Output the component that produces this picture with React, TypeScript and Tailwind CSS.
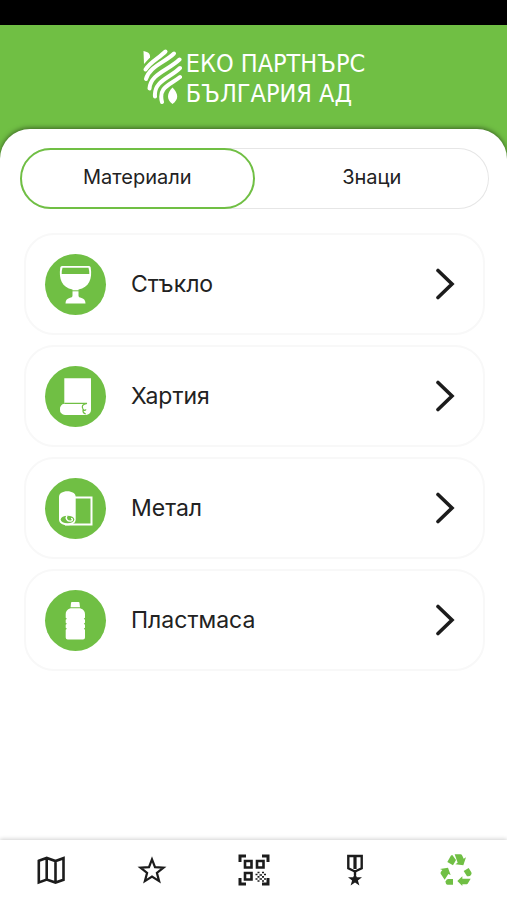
import React from 'react';

const GlassIcon = () => (
  <svg viewBox="0 0 61 61" className="size-full" fill="#fff">
    <path d="M17 12h27q1.500 0 1.700 1.500C47.500 25 44 33.500 33.500 35.500v6c0 1.500 1 2 3 2.500 2.500.7 4 2.300 4 5.500h-20c0-3.200 1.500-4.800 4-5.500 2-.5 3-1 3-2.500v-6C17 33.500 13.500 25 15.300 13.500Q15.500 12 17 12z" />
    <path d="M17.500 13.800h26q.9 3 .8 6.200H16.700q-.1-3.200.8-6.200z" fill="#70bf44" />
    <path d="M27 36.800h7" stroke="#70bf44" strokeWidth="1" />
  </svg>
);

const PaperIcon = () => (
  <svg viewBox="0 0 61 61" className="size-full" fill="#fff">
    <path d="M19.300 12.300H46V44a5 5 0 0 1-5 5H20a5 5 0 0 1-5-5.500 5 5 0 0 1 4.300-5.700z" />
    <path d="M19.300 37.300H42c-4.500.8-5.700 3-4 5.700 1.200 1.800 2.800 1.600 2.800.2M38 43.500c-.3 2.600.8 4 2.800 4.500" fill="none" stroke="#70bf44" strokeWidth="1.200" />
  </svg>
);

const MetalIcon = () => (
  <svg viewBox="0 0 61 61" className="size-full" fill="none">
    <path d="M30 19.500h16.500v27H20" stroke="#fff" strokeWidth="2" />
    <path d="M14 19c0-3.500 3.600-5.700 8.300-5.700s8.400 2.200 8.400 5.700v22.500c0 3-3 5.800-8.400 5.800S14 44.500 14 41.500z" fill="#fff" />
    <ellipse cx="22.500" cy="41.500" rx="6.800" ry="3.800" fill="#70bf44" />
    <path d="M22 37.500c-2 3 .4 6 3.700 5.600 2.300-.3 2.200-2.600.3-2.700" stroke="#fff" strokeWidth="1.400" />
  </svg>
);

const BottleIcon = () => (
  <svg viewBox="0 0 61 61" className="size-full" fill="#fff">
    <path d="M27 12h6.500q1 0 1 1l.5 4.200h-9.400L26 13q0-1 1-1z" />
    <path d="M25.500 18.300h9.600c3.700 1.200 4.900 3.200 4.900 6v3.500l-1.200 1 1.200 1v3l-1.200 1 1.200 1v3l-1.200 1 1.200 1v7.700q0 2-2 2H22.700q-2 0-2-2v-7.700l1.200-1-1.200-1v-3l1.200-1-1.200-1v-3l1.200-1-1.200-1v-3.500c0-2.800 1.200-4.800 4.800-6z" />
  </svg>
);

const Logo = () => (
  <svg viewBox="0 0 40 58" className="h-[58px] w-10" fill="none" stroke="#fff" strokeWidth="4" strokeLinecap="round">
    <path d="M1.500 3c5 1 7 3 6.500 6.500L2 16z" fill="#fff" stroke="none" />
    <path d="M23.500 3.500C17 10 8 14 3.500 21.500" />
    <path d="M32 5.500C22 15 7 19 4 31" />
    <path d="M37.500 11.500C26 22.500 8.500 26 7.500 40.500" />
    <path d="M38 20C28 30 11.500 33 13 48.500" />
    <path d="M38 29C28 37 16 39 20 54" />
    <path d="M30.500 39.500c6 6 6.500 12 0 16.500-6.500-4.500-5.500-11 0-16.500z" fill="#fff" stroke="none" />
  </svg>
);

const MapIcon = () => (
  <svg viewBox="0 0 32 32" className="size-8" fill="none" stroke="#1c1c1c" strokeWidth="2.600">
    <path d="M3.800 6.800 11.700 4l8.800 3 8-2.800v21.600L20.500 28.600l-8.800-3-7.900 2.800zM11.700 4v21.600M20.500 7v21.600" />
  </svg>
);

const StarIcon = () => (
  <svg viewBox="0 0 32 32" className="size-8" fill="none" stroke="#1c1c1c" strokeWidth="2.200">
    <path d="m16 5.300 3 7.900 8.500.4-6.600 5.300 2.200 8.200-7.100-4.600-7.100 4.600 2.200-8.200-6.600-5.300 8.500-.4z" />
  </svg>
);

const ScanIcon = () => (
  <svg viewBox="0 0 32 32" className="size-8" fill="none" stroke="#1c1c1c">
    <path d="M2 8V2h6M24 2h6v6M2 24v6h6M30 24v6h-6" strokeWidth="3" />
    <path d="M7 7h6.500v6.500H7zM19 7h6.500v6.500H19zM7 19h6.500v6.500H7z" strokeWidth="2.600" />
    <path d="M19.500 18.500h2M24 18.500h2M17.500 20.500h2M21.500 21h2.500M26 20.500h2M19.500 22.800h2M24 22.800h2M17.500 25h2M21.500 25h2.500M26 25h2M19.500 27h2M24 27h2" strokeWidth="1.700" />
  </svg>
);

const MedalIcon = () => (
  <svg viewBox="0 0 32 32" className="size-8" fill="none" stroke="#1c1c1c">
    <path d="M9.300 2h13.400v12.300L16 17.500l-6.700-3.200z" strokeWidth="2.400" />
    <path d="M16 2v13" strokeWidth="3.200" />
    <path d="M16 17v4" strokeWidth="2.400" />
    <path d="m16 18.500 1.800 4.700h5.200l-4.100 3.200 1.500 5.100-4.400-3.100-4.400 3.100 1.500-5.100L9 23.200h5.200z" fill="#1c1c1c" stroke="none" />
  </svg>
);

const RecycleIcon = () => (
  <svg viewBox="0 0 96 96" className="size-8" fill="#70bf44">
    <path d="M22 24 32 6q2-3 5-3l11 15-9 16z" />
    <path d="M44 1h17q4 0 6 4l4 9 7-4-8 24-24-3 7-5z" />
    <path d="m71 51 15-9 8 13q2 4-1 8-3 4-8 4h-4z" />
    <path d="M52 81 67 67v7h25L83 89q-2 2-5 2H67v5z" />
    <path d="m0 45 24-4 8 22-7-3-11 17L2 59q-1-3 1-6l4-5z" />
    <path d="M17 82q3-7 8-7h14v17H23q-3 0-5-3-2-4-1-7z" />
  </svg>
);

const materials = [
  { label: 'Стъкло', icon: GlassIcon },
  { label: 'Хартия', icon: PaperIcon },
  { label: 'Метал', icon: MetalIcon },
  { label: 'Пластмаса', icon: BottleIcon },
];

const navItems = [
  { label: 'Карта', icon: MapIcon },
  { label: 'Любими', icon: StarIcon },
  { label: 'Сканирай', icon: ScanIcon },
  { label: 'Награди', icon: MedalIcon },
  { label: 'Рециклиране', icon: RecycleIcon },
];

const App: React.FC = () => {
  return (
    <div lang="bg" className="flex min-h-screen flex-col bg-[#70bf44] font-['Inter','Noto_Sans',sans-serif] text-[#222]">
      <div className="h-[25px] bg-black" />

      <header className="flex h-[104px] items-center justify-center gap-1">
        <Logo />
        <h1 className="pt-1 font-['DejaVu_Sans_Condensed','DejaVu_Sans',sans-serif] text-[25px] leading-[30px] text-white">
          ЕКО ПАРТНЪРС
          <br />
          БЪЛГАРИЯ АД
        </h1>
      </header>

      <main className="flex-1 rounded-t-[30px] bg-white pt-[19px] pr-[18px] pb-6 pl-5 shadow-[0_-1px_5px_rgba(0,0,0,0.5)]">
        <div className="flex h-[61px] rounded-full shadow-[inset_0_0_0_1px_#e6e6e6]">
          <button className="w-1/2 rounded-full border-2 border-[#70bf44] pb-1 text-[20px]">Материали</button>
          <button className="w-1/2 pb-1 text-[20px]">Знаци</button>
        </div>

        <ul className="mt-6 flex flex-col gap-[10px] px-1">
          {materials.map(({ label, icon: Icon }) => (
            <li key={label}>
              <button className="flex h-[102px] w-full items-center rounded-[30px] border-2 border-[#f8f8f8] pr-7 pl-[19px] text-left">
                <span className="size-[61px] shrink-0 rounded-full bg-[#70bf44]">
                  <Icon />
                </span>
                <span className="flex-1 pl-[25px] text-[23px]">{label}</span>
                <svg viewBox="0 0 20 32" className="h-8 w-5" fill="none" stroke="#1c1c1c" strokeWidth="3.600" strokeLinecap="round">
                  <path d="m3 2.500 14 13.500L3 29.500" />
                </svg>
              </button>
            </li>
          ))}
        </ul>
      </main>

      <nav className="flex h-[60px] bg-white shadow-[0_-1px_4px_rgba(0,0,0,0.18)]">
        {navItems.map(({ label, icon: Icon }) => (
          <button key={label} aria-label={label} className="flex flex-1 items-center justify-center">
            <Icon />
          </button>
        ))}
      </nav>
    </div>
  );
};

export default App;
